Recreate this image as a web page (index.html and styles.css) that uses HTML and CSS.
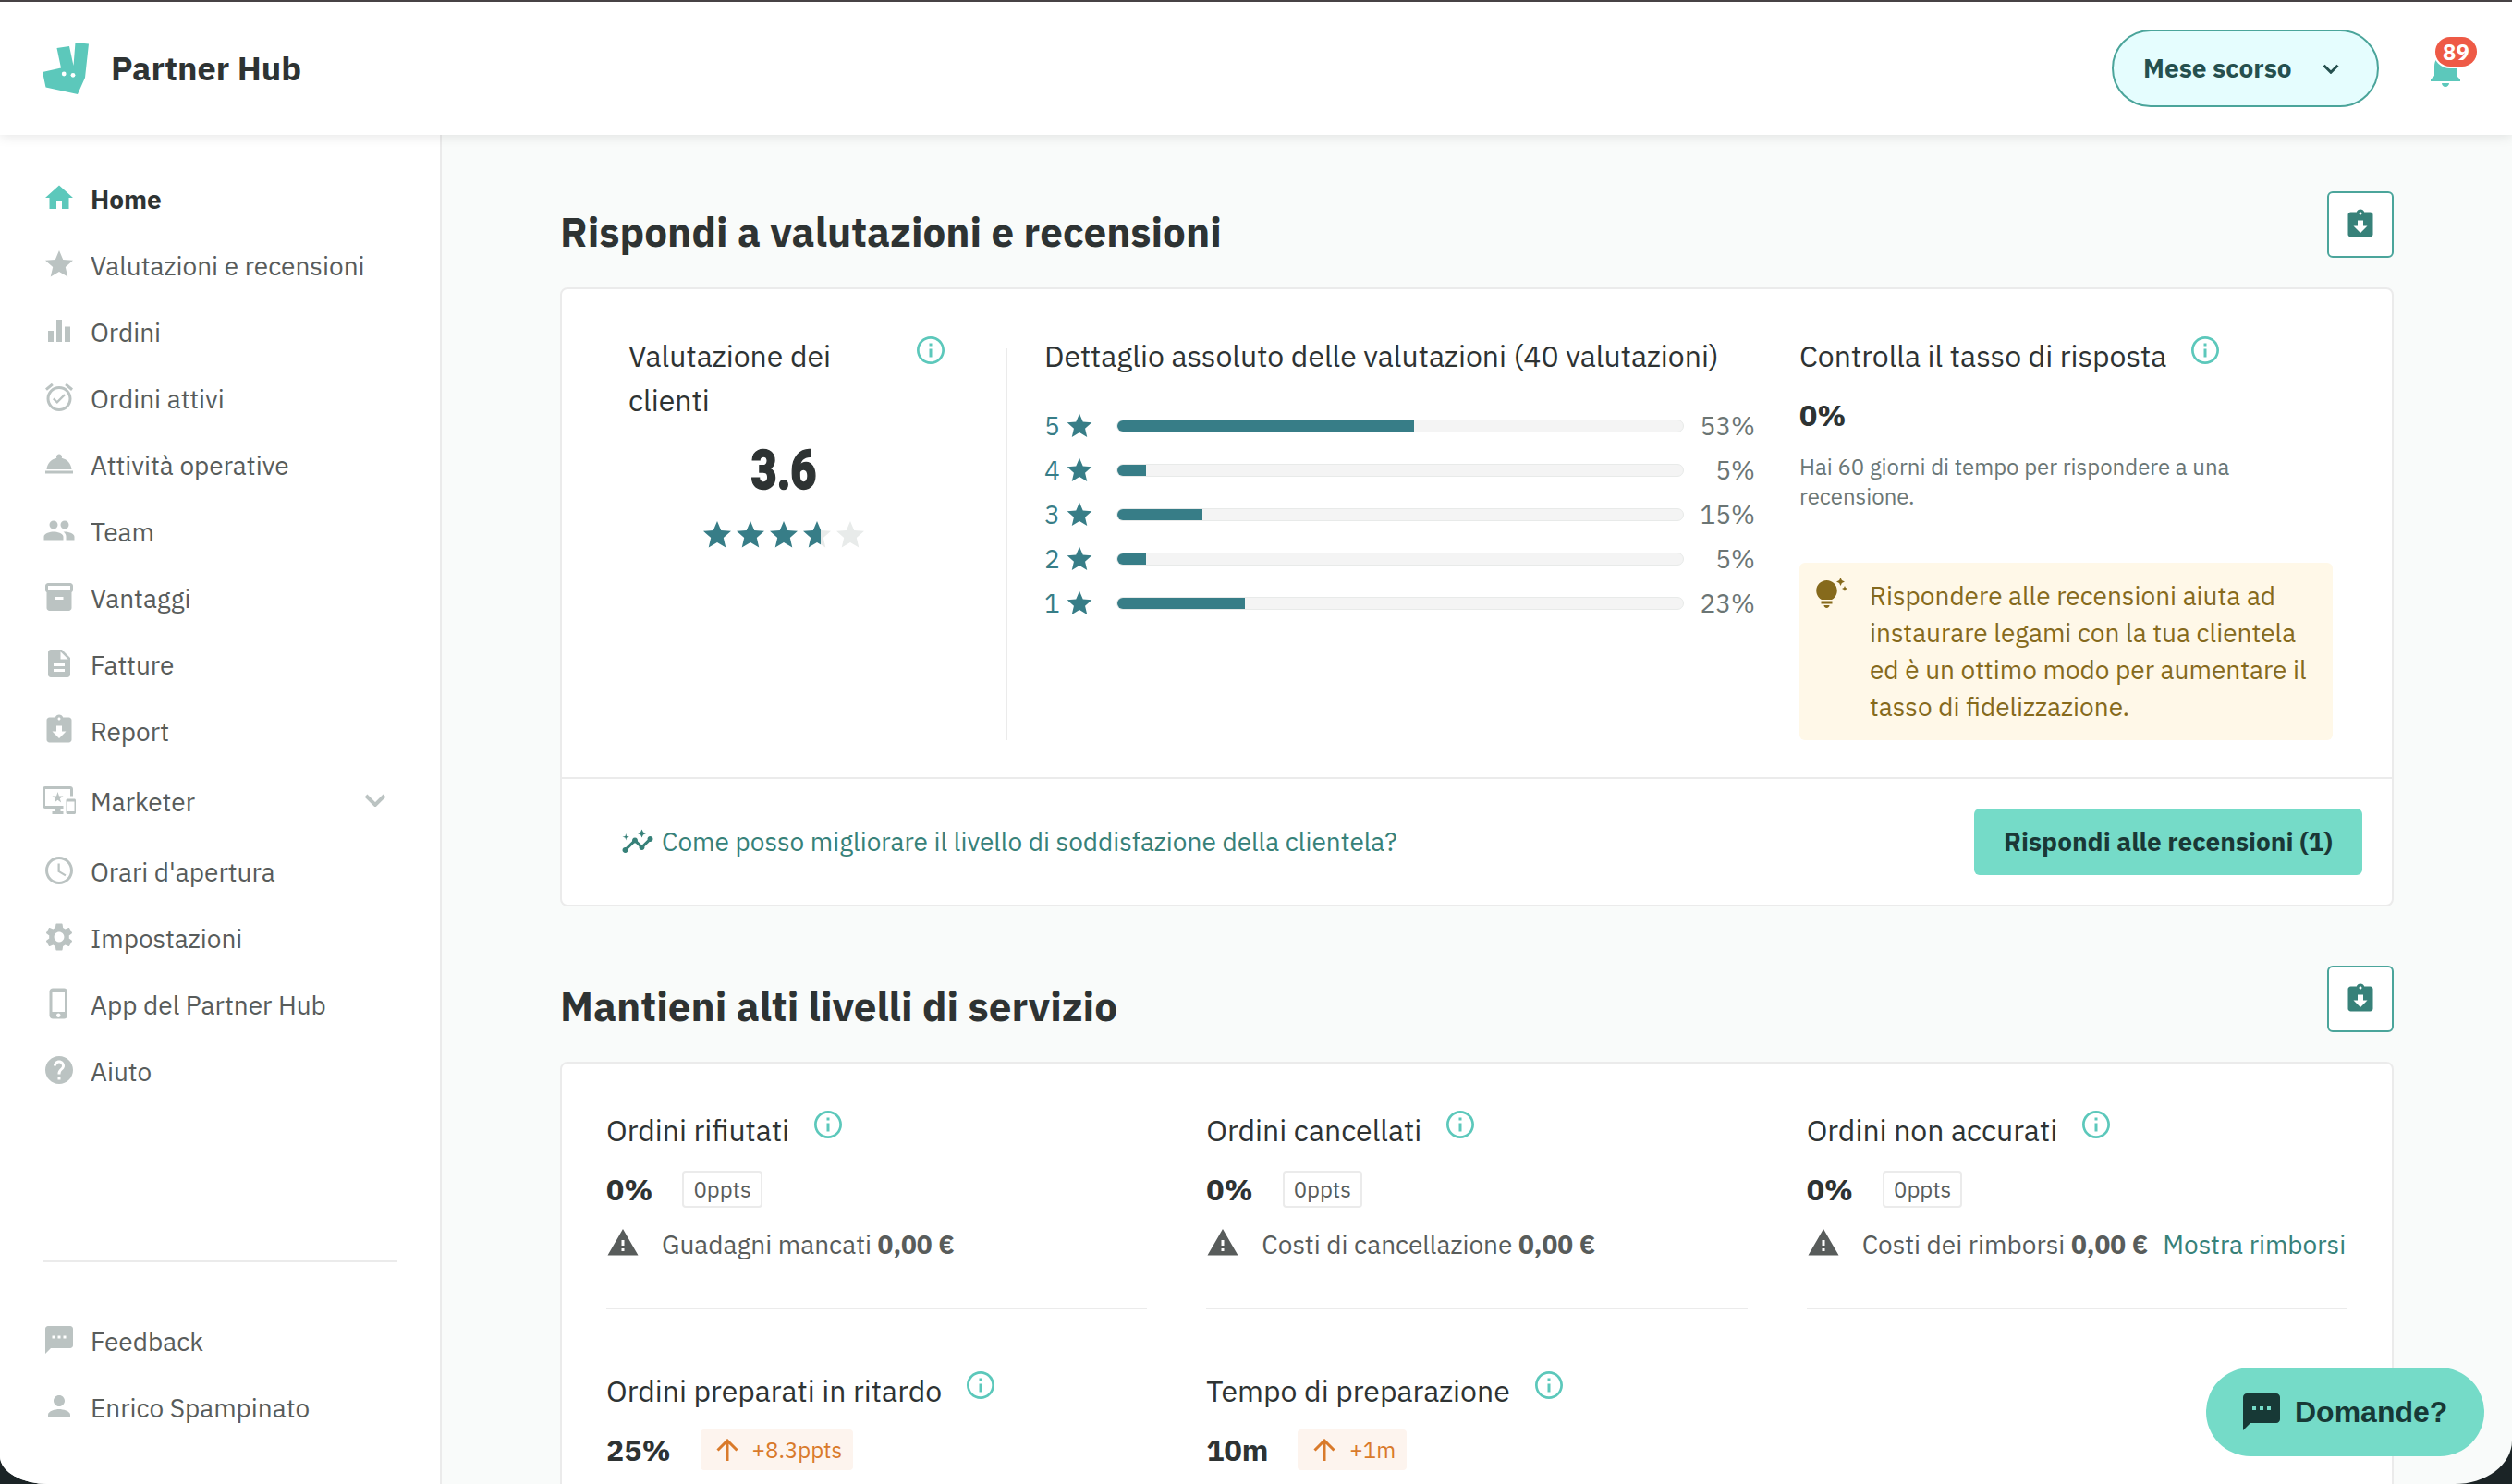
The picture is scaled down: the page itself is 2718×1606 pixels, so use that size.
FILE: index.html
```html
<!DOCTYPE html>
<html lang="it">

<head>
    <meta charset="UTF-8" />
    <meta name="viewport" content="width=device-width, initial-scale=1.0" />
    <title>Partner Hub</title>
    <link rel="stylesheet" href="styles.css">
</head>

<body>

    <!-- icons -->
    <svg class="sprite" aria-hidden="true">
        <symbol id="home" viewBox="0 0 24 24"><path d="M10 20v-6h4v6h5v-8h3L12 3 2 12h3v8z" /></symbol>
        <symbol id="star" viewBox="0 0 24 24"><path d="M12 17.27L18.18 21l-1.64-7.03L22 9.24l-7.19-.61L12 2 9.19 8.63 2 9.24l5.46 4.73L5.82 21z" /></symbol>
        <symbol id="bars" viewBox="0 0 24 24"><path d="M4 12h4v8H4zM10 4h4v16h-4zM16 9h4v11h-4z" /></symbol>
        <symbol id="alarm" viewBox="0 0 24 24"><path d="M22 5.72l-4.6-3.86-1.29 1.53 4.6 3.86L22 5.72zM7.88 3.39L6.6 1.86 2 5.71l1.29 1.53 4.59-3.85zM12 4c-4.97 0-9 4.03-9 9s4.02 9 9 9c4.97 0 9-4.03 9-9s-4.03-9-9-9zm0 16c-3.87 0-7-3.13-7-7s3.13-7 7-7 7 3.13 7 7-3.13 7-7 7zm-1.46-5.47L8.41 12.4l-1.06 1.06 3.18 3.18 6-6-1.06-1.06-4.93 4.95z" /></symbol>
        <symbol id="service" viewBox="0 0 24 24"><path d="M2 17h20v2H2zm11.84-9.21c.1-.24.16-.51.16-.79 0-1.1-.9-2-2-2s-2 .9-2 2c0 .28.06.55.16.79C6.25 8.6 3.27 11.93 3 16h18c-.27-4.07-3.25-7.4-7.16-8.21z" /></symbol>
        <symbol id="team" viewBox="0 0 24 24"><path d="M16 11c1.66 0 2.99-1.34 2.99-3S17.66 5 16 5c-1.66 0-3 1.34-3 3s1.34 3 3 3zm-8 0c1.66 0 2.99-1.34 2.99-3S9.66 5 8 5C6.34 5 5 6.34 5 8s1.34 3 3 3zm0 2c-2.33 0-7 1.17-7 3.5V19h14v-2.5c0-2.33-4.67-3.5-7-3.5zm8 0c-.29 0-.62.02-.97.05 1.16.84 1.97 1.97 1.97 3.45V19h6v-2.5c0-2.33-4.67-3.5-7-3.5z" /></symbol>
        <symbol id="box" viewBox="0 0 24 24"><path d="M20 2H4c-1 0-2 .9-2 2v3.01c0 .72.43 1.34 1 1.69V20c0 1.1 1.1 2 2 2h14c.9 0 2-.9 2-2V8.7c.57-.35 1-.97 1-1.69V4c0-1.1-1-2-2-2zm-5 12H9v-2h6v2zm5-7H4V4h16v3z" /></symbol>
        <symbol id="file" viewBox="0 0 24 24"><path d="M14 2H6c-1.1 0-1.99.9-1.99 2L4 20c0 1.1.89 2 1.99 2H18c1.1 0 2-.9 2-2V8l-6-6zm2 16H8v-2h8v2zm0-4H8v-2h8v2zm-3-5V3.5L18.5 9H13z" /></symbol>
        <symbol id="report" viewBox="0 0 24 24"><path d="M19 3h-4.18C14.4 1.84 13.3 1 12 1c-1.3 0-2.4.84-2.82 2H5c-1.1 0-2 .9-2 2v14c0 1.1.9 2 2 2h14c1.1 0 2-.9 2-2V5c0-1.1-.9-2-2-2zm-7 0c.55 0 1 .45 1 1s-.45 1-1 1-1-.45-1-1 .45-1 1-1zm0 15l-5-5h3V9h4v4h3l-5 5z" /></symbol>
        <symbol id="devices" viewBox="0 0 24 24"><path d="M23 11.01L18 11c-.55 0-1 .45-1 1v9c0 .55.45 1 1 1h5c.55 0 1-.45 1-1v-9c0-.55-.45-.99-1-.99zM23 20h-5v-7h5v7zM20 2H2C.89 2 0 2.89 0 4v12c0 1.1.89 2 2 2h7v2H7v2h8v-2h-2v-2h2v-2H2V4h18v5h2V4c0-1.11-.9-2-2-2zm-8.03 7L11 6l-.97 3H7l2.47 1.76-.94 2.91 2.47-1.8 2.47 1.8-.94-2.91L15 9h-3.03z" /></symbol>
        <symbol id="clock" viewBox="0 0 24 24"><path d="M11.99 2C6.47 2 2 6.48 2 12s4.47 10 9.99 10C17.52 22 22 17.52 22 12S17.52 2 11.99 2zM12 20c-4.42 0-8-3.58-8-8s3.58-8 8-8 8 3.58 8 8-3.58 8-8 8zm.5-13H11v6l5.25 3.15.75-1.23-4.5-2.67z" /></symbol>
        <symbol id="gear" viewBox="0 0 24 24"><path d="M19.14 12.94c.04-.3.06-.61.06-.94 0-.32-.02-.64-.07-.94l2.03-1.58c.18-.14.23-.41.12-.61l-1.92-3.32c-.12-.22-.37-.29-.59-.22l-2.39.96c-.5-.38-1.03-.7-1.62-.94l-.36-2.54c-.04-.24-.24-.41-.48-.41h-3.84c-.24 0-.43.17-.47.41l-.36 2.54c-.59.24-1.13.57-1.62.94l-2.39-.96c-.22-.08-.47 0-.59.22L2.74 8.87c-.12.21-.08.47.12.61l2.03 1.58c-.05.3-.09.63-.09.94s.02.64.07.94l-2.03 1.58c-.18.14-.23.41-.12.61l1.92 3.32c.12.22.37.29.59.22l2.39-.96c.5.38 1.03.7 1.62.94l.36 2.54c.05.24.24.41.48.41h3.84c.24 0 .44-.17.47-.41l.36-2.54c.59-.24 1.13-.56 1.62-.94l2.39.96c.22.08.47 0 .59-.22l1.92-3.32c.12-.22.07-.47-.12-.61l-2.01-1.58zM12 15.6c-1.98 0-3.6-1.62-3.6-3.6s1.62-3.6 3.6-3.6 3.6 1.62 3.6 3.6-1.62 3.6-3.6 3.6z" /></symbol>
        <symbol id="phone" viewBox="0 0 24 24"><path d="M15.5 1h-8C6.12 1 5 2.12 5 3.5v17C5 21.88 6.12 23 7.5 23h8c1.38 0 2.5-1.12 2.5-2.5v-17C18 2.12 16.88 1 15.5 1zm-4 21c-.83 0-1.5-.67-1.5-1.5s.67-1.5 1.5-1.5 1.5.67 1.5 1.5-.67 1.5-1.5 1.5zm4.5-4H7V4h9v14z" /></symbol>
        <symbol id="help" viewBox="0 0 24 24"><path d="M12 2C6.48 2 2 6.48 2 12s4.48 10 10 10 10-4.48 10-10S17.52 2 12 2zm1 17h-2v-2h2v2zm2.07-7.75l-.9.92C13.45 12.9 13 13.5 13 15h-2v-.5c0-1.1.45-2.1 1.17-2.83l1.24-1.26c.37-.36.59-.86.59-1.41 0-1.1-.9-2-2-2s-2 .9-2 2H8c0-2.21 1.79-4 4-4s4 1.79 4 4c0 .88-.36 1.68-.93 2.25z" /></symbol>
        <symbol id="chat" viewBox="0 0 24 24"><path d="M20 2H4c-1.1 0-1.99.9-1.99 2L2 22l4-4h14c1.1 0 2-.9 2-2V4c0-1.1-.9-2-2-2zM9 11H7V9h2v2zm4 0h-2V9h2v2zm4 0h-2V9h2v2z" /></symbol>
        <symbol id="person" viewBox="0 0 24 24"><path d="M12 12c2.21 0 4-1.79 4-4s-1.79-4-4-4-4 1.79-4 4 1.79 4 4 4zm0 2c-2.67 0-8 1.34-8 4v2h16v-2c0-2.66-5.33-4-8-4z" /></symbol>
        <symbol id="bell" viewBox="0 0 24 24"><path d="M12 22c1.1 0 2-.9 2-2h-4c0 1.1.89 2 2 2zm6-6v-5c0-3.07-1.64-5.64-4.5-6.32V4c0-.83-.67-1.5-1.5-1.5s-1.5.67-1.5 1.5v.68C7.63 5.36 6 7.92 6 11v5l-2 2v1h16v-1l-2-2z" /></symbol>
        <symbol id="info" viewBox="0 0 24 24"><path d="M11 7h2v2h-2zm0 4h2v6h-2zm1-9C6.48 2 2 6.48 2 12s4.48 10 10 10 10-4.48 10-10S17.52 2 12 2zm0 18.2c-4.53 0-8.2-3.67-8.2-8.2s3.67-8.2 8.2-8.2 8.2 3.67 8.2 8.2-3.67 8.2-8.2 8.2z" /></symbol>
        <symbol id="warning" viewBox="0 0 24 24"><path d="M1 21h22L12 2 1 21zm12-3h-2v-2h2v2zm0-4h-2v-4h2v4z" /></symbol>
        <symbol id="bulb" viewBox="0 0 24 24"><path d="M7 20h4c0 1.1-.9 2-2 2s-2-.9-2-2zm-2-1h8v-2H5v2zm11.5-9.5c0 3.82-2.66 5.86-3.77 6.5H5.27C4.16 15.36 1.5 13.32 1.5 9.5 1.5 5.36 4.86 2 9 2s7.5 3.36 7.5 7.5zm4.87-2.13L20 8l1.37.63L22 10l.63-1.37L24 8l-1.37-.63L22 6l-.63 1.37zM19 6l.94-2.06L22 3l-2.06-.94L19 0l-.94 2.06L16 3l2.06.94L19 6z" /></symbol>
        <symbol id="insights" viewBox="0 0 24 24"><path d="M21 8c-1.45 0-2.26 1.44-1.93 2.51l-3.55 3.56c-.3-.09-.74-.09-1.04 0l-2.55-2.55C12.27 10.45 11.46 9 10 9c-1.45 0-2.27 1.44-1.93 2.52l-4.56 4.55C2.44 15.74 1 16.55 1 18c0 1.1.9 2 2 2 1.45 0 2.26-1.44 1.93-2.51l4.55-4.56c.3.09.74.09 1.04 0l2.55 2.55C12.73 16.55 13.54 18 15 18c1.45 0 2.27-1.44 1.93-2.52l3.56-3.55C21.56 12.26 23 11.45 23 10c0-1.1-.9-2-2-2zM15 9l.94-2.07L18 6l-2.06-.93L15 3l-.92 2.07L12 6l2.08.93L15 9zM3.5 11L4 9l2-.5L4 8l-.5-2L3 8l-2 .5L3 9l.5 2z" /></symbol>
        <symbol id="arrow-up" viewBox="0 0 24 24"><path d="M12 24V2M1.5 12.5L12 2l10.5 10.5" fill="none" stroke="currentColor" stroke-width="3" /></symbol>
        <symbol id="chevron" viewBox="0 0 24 14"><path d="M2 2l10 10L22 2" fill="none" stroke="currentColor" stroke-width="4" /></symbol>
    </svg>

    <div class="app">
        <header class="header">
            <svg class="logo" viewBox="0 0 50 56">
                <path d="M0 32l20-4.5L15.5 6 29 4l4.5 21L35.5 0 50 1.5 46 38l-8 18L3.5 48.5z" />
                <circle cx="23.2" cy="34" r="2.4" fill="#fff" />
                <circle cx="33" cy="35.3" r="2.4" fill="#fff" />
            </svg>
            <span class="brand">Partner Hub</span>
            <button class="period">
                <span class="period-label">Mese scorso</span>
                <svg class="period-arrow"><use href="#chevron" /></svg>
            </button>
            <div class="notifications">
                <svg class="bell"><use href="#bell" /></svg>
                <span class="badge">89</span>
            </div>
        </header>

        <div class="layout">
            <nav class="sidebar">
                <a class="nav-item active"><svg class="icon"><use href="#home" /></svg>Home</a>
                <a class="nav-item"><svg class="icon"><use href="#star" /></svg>Valutazioni e recensioni</a>
                <a class="nav-item"><svg class="icon"><use href="#bars" /></svg>Ordini</a>
                <a class="nav-item"><svg class="icon"><use href="#alarm" /></svg>Ordini attivi</a>
                <a class="nav-item"><svg class="icon"><use href="#service" /></svg>Attività operative</a>
                <a class="nav-item"><svg class="icon"><use href="#team" /></svg>Team</a>
                <a class="nav-item"><svg class="icon"><use href="#box" /></svg>Vantaggi</a>
                <a class="nav-item"><svg class="icon"><use href="#file" /></svg>Fatture</a>
                <a class="nav-item"><svg class="icon"><use href="#report" /></svg>Report</a>
                <a class="nav-item expandable">
                    <svg class="icon"><use href="#devices" /></svg>Marketer
                    <svg class="nav-arrow"><use href="#chevron" /></svg>
                </a>
                <a class="nav-item"><svg class="icon"><use href="#clock" /></svg>Orari d'apertura</a>
                <a class="nav-item"><svg class="icon"><use href="#gear" /></svg>Impostazioni</a>
                <a class="nav-item"><svg class="icon"><use href="#phone" /></svg>App del Partner Hub</a>
                <a class="nav-item"><svg class="icon"><use href="#help" /></svg>Aiuto</a>

                <div class="nav-bottom">
                    <a class="nav-item"><svg class="icon"><use href="#chat" /></svg>Feedback</a>
                    <a class="nav-item"><svg class="icon"><use href="#person" /></svg>Enrico Spampinato</a>
                </div>
            </nav>

            <main class="main">
                <!-- ratings -->
                <section class="section">
                    <div class="section-head">
                        <h2 class="section-title">Rispondi a valutazioni e recensioni</h2>
                        <button class="download-btn"><svg class="icon"><use href="#report" /></svg></button>
                    </div>
                    <div class="card">
                        <div class="ratings">
                            <div class="overall">
                                <div class="title-row wide">
                                    <h3 class="title">Valutazione dei<br>clienti</h3>
                                    <svg class="icon info"><use href="#info" /></svg>
                                </div>
                                <div class="score">3.6</div>
                                <div class="stars">
                                    <svg class="icon"><use href="#star" /></svg>
                                    <svg class="icon"><use href="#star" /></svg>
                                    <svg class="icon"><use href="#star" /></svg>
                                    <svg class="icon" viewBox="0 0 24 24">
                                        <linearGradient id="part" x1="0" x2="24" y1="0" y2="0" gradientUnits="userSpaceOnUse">
                                            <stop offset="60%" stop-color="#377d87" />
                                            <stop offset="60%" stop-color="#e8ebea" />
                                        </linearGradient>
                                        <path fill="url(#part)" d="M12 17.27L18.18 21l-1.64-7.03L22 9.24l-7.19-.61L12 2 9.19 8.63 2 9.24l5.46 4.73L5.82 21z" />
                                    </svg>
                                    <svg class="icon off"><use href="#star" /></svg>
                                </div>
                            </div>

                            <div class="separator"></div>

                            <div class="breakdown">
                                <h3 class="title">Dettaglio assoluto delle valutazioni (40 valutazioni)</h3>
                                <div class="rows">
                                    <div class="row"><span class="num">5</span><svg class="row-star"><use href="#star" /></svg><div class="bar"><div class="fill" style="width: 52.5%"></div></div><span class="pct">53%</span></div>
                                    <div class="row"><span class="num">4</span><svg class="row-star"><use href="#star" /></svg><div class="bar"><div class="fill" style="width: 5%"></div></div><span class="pct">5%</span></div>
                                    <div class="row"><span class="num">3</span><svg class="row-star"><use href="#star" /></svg><div class="bar"><div class="fill" style="width: 15%"></div></div><span class="pct">15%</span></div>
                                    <div class="row"><span class="num">2</span><svg class="row-star"><use href="#star" /></svg><div class="bar"><div class="fill" style="width: 5%"></div></div><span class="pct">5%</span></div>
                                    <div class="row"><span class="num">1</span><svg class="row-star"><use href="#star" /></svg><div class="bar"><div class="fill" style="width: 22.5%"></div></div><span class="pct">23%</span></div>
                                </div>
                            </div>

                            <div class="reply">
                                <div class="title-row">
                                    <h3 class="title">Controlla il tasso di risposta</h3>
                                    <svg class="icon info"><use href="#info" /></svg>
                                </div>
                                <div class="value reply-value">0%</div>
                                <p class="hint">Hai 60 giorni di tempo per rispondere a una<br>recensione.</p>
                                <div class="tip">
                                    <svg class="icon"><use href="#bulb" /></svg>
                                    <p class="tip-text">Rispondere alle recensioni aiuta ad<br>instaurare legami con la tua clientela<br>ed è un ottimo modo per aumentare il<br>tasso di fidelizzazione.</p>
                                </div>
                            </div>
                        </div>
                        <div class="card-footer">
                            <a class="link improve"><svg class="icon"><use href="#insights" /></svg><span class="improve-text">Come posso migliorare il livello di soddisfazione della clientela?</span></a>
                            <button class="primary-btn">Rispondi alle recensioni (1)</button>
                        </div>
                    </div>
                </section>

                <!-- service levels -->
                <section class="section">
                    <div class="section-head">
                        <h2 class="section-title">Mantieni alti livelli di servizio</h2>
                        <button class="download-btn"><svg class="icon"><use href="#report" /></svg></button>
                    </div>
                    <div class="card metrics">
                        <div class="metric">
                            <div class="title-row">
                                <h3 class="title">Ordini rifiutati</h3>
                                <svg class="icon info"><use href="#info" /></svg>
                            </div>
                            <div class="value-row"><span class="value">0%</span><span class="chip">0ppts</span></div>
                            <div class="cost"><svg class="icon"><use href="#warning" /></svg><span>Guadagni mancati <b>0,00 €</b></span></div>
                        </div>
                        <div class="metric">
                            <div class="title-row">
                                <h3 class="title">Ordini cancellati</h3>
                                <svg class="icon info"><use href="#info" /></svg>
                            </div>
                            <div class="value-row"><span class="value">0%</span><span class="chip">0ppts</span></div>
                            <div class="cost"><svg class="icon"><use href="#warning" /></svg><span>Costi di cancellazione <b>0,00 €</b></span></div>
                        </div>
                        <div class="metric">
                            <div class="title-row">
                                <h3 class="title">Ordini non accurati</h3>
                                <svg class="icon info"><use href="#info" /></svg>
                            </div>
                            <div class="value-row"><span class="value">0%</span><span class="chip">0ppts</span></div>
                            <div class="cost"><svg class="icon"><use href="#warning" /></svg><span>Costi dei rimborsi <b>0,00 €</b></span><a class="link refunds">Mostra rimborsi</a></div>
                        </div>
                        <div class="metric">
                            <div class="title-row">
                                <h3 class="title">Ordini preparati in ritardo</h3>
                                <svg class="icon info"><use href="#info" /></svg>
                            </div>
                            <div class="value-row"><span class="value">25%</span><span class="chip up"><svg class="chip-arrow"><use href="#arrow-up" /></svg>+8.3ppts</span></div>
                        </div>
                        <div class="metric">
                            <div class="title-row">
                                <h3 class="title">Tempo di preparazione</h3>
                                <svg class="icon info"><use href="#info" /></svg>
                            </div>
                            <div class="value-row"><span class="value">10m</span><span class="chip up"><svg class="chip-arrow"><use href="#arrow-up" /></svg>+1m</span></div>
                        </div>
                    </div>
                </section>
            </main>
        </div>

        <button class="help-btn"><svg class="help-icon"><use href="#chat" /></svg>Domande?</button>
    </div>

</body>

</html>
```
FILE: styles.css
```css
* {
    box-sizing: border-box;
}

body {
    margin: 0;
    background: #1b2426;
    color: #2e3333;
    font-family: "IBM Plex Sans", Roboto, sans-serif;
    font-size: 28px;
}

h2,
h3,
p {
    margin: 0;
}

button {
    border: none;
    font: inherit;
    cursor: pointer;
}

.sprite {
    position: absolute;
    width: 0;
    height: 0;
}

.icon {
    flex: none;
    width: 36px;
    height: 36px;
    fill: currentColor;
}

.app {
    position: relative;
    display: flex;
    flex-direction: column;
    height: 1606px;
    overflow: hidden;
    border-top: 2px solid #474345;
    border-radius: 0 0 62px 52px / 0 0 47px 30px;
    background: #f9fbfa;
}

/* header */
.header {
    position: relative;
    z-index: 1;
    flex: none;
    display: flex;
    align-items: center;
    height: 144px;
    padding: 0 48px 0 46px;
    background: #fff;
    box-shadow: 0 2px 12px rgba(0, 0, 0, 0.1);
}

.logo {
    width: 50px;
    height: 56px;
    fill: #5cc8bb;
}

.brand {
    margin-left: 24px;
    padding-bottom: 2px;
    font-size: 36px;
    font-weight: 700;
}

.period {
    display: flex;
    align-items: center;
    justify-content: space-between;
    width: 289px;
    height: 84px;
    margin-left: auto;
    padding: 0 41px 0 32px;
    border: 2px solid #4ba59b;
    border-radius: 42px;
    background: #e5fdfe;
    color: #25504f;
    font-weight: 700;
}

.period-label {
    padding-bottom: 2px;
}

.period-arrow {
    width: 18px;
    height: 11px;
}

.notifications {
    position: relative;
    width: 48px;
    height: 48px;
    margin-left: 48px;
}

.bell {
    display: block;
    width: 48px;
    height: 48px;
    fill: #5cc8bb;
}

.badge {
    position: absolute;
    top: -10px;
    left: 13px;
    width: 45px;
    height: 32px;
    border-radius: 16px;
    background: #ee5a46;
    box-shadow: 0 0 0 2px #fff;
    color: #fff;
    font-size: 24px;
    font-weight: 700;
    line-height: 32px;
    text-align: center;
}

.layout {
    flex: 1;
    display: flex;
    min-height: 0;
}

/* sidebar */
.sidebar {
    flex: none;
    width: 478px;
    padding: 34px 46px 0;
    border-right: 2px solid #ebebeb;
    background: #fff;
}

.nav-item {
    display: flex;
    align-items: center;
    gap: 16px;
    height: 72px;
    padding-bottom: 2px;
    color: #585c5b;
}

.nav-item .icon {
    margin-bottom: 2px;
    color: #bbc3c2;
}

.nav-item.active {
    color: #2e3333;
    font-weight: 700;
}

.nav-item.active .icon {
    color: #5cc8bb;
}

.nav-item.expandable {
    height: 80px;
}

.nav-arrow {
    width: 24px;
    height: 14px;
    margin-left: auto;
    margin-right: 12px;
    margin-bottom: 2px;
    color: #bbc3c2;
}

.nav-bottom {
    margin-top: 168px;
    padding-top: 50px;
    border-top: 2px solid #ebebeb;
}

/* content */
.main {
    flex: 1;
    padding: 61px 128px 0;
}

.section {
    margin-bottom: 64px;
}

.section-head {
    display: flex;
    align-items: flex-end;
    justify-content: space-between;
    margin-bottom: 32px;
}

.section-title {
    padding-bottom: 1px;
    font-size: 44px;
    font-weight: 700;
    line-height: 54px;
}

.download-btn {
    display: flex;
    align-items: center;
    justify-content: center;
    width: 72px;
    height: 72px;
    padding: 0;
    border: 2px solid #4ba59b;
    border-radius: 6px;
    background: #fff;
    color: #378179;
}

.card {
    border: 2px solid #ebebeb;
    border-radius: 8px;
    background: #fff;
}

.title-row {
    display: flex;
    align-items: flex-start;
    gap: 24px;
}

.title-row.wide {
    justify-content: space-between;
    margin-right: -9px;
}

.title {
    font-size: 32px;
    font-weight: 400;
    line-height: 48px;
    white-space: nowrap;
}

.info {
    color: #5cc8bb;
}

.value {
    font-size: 32px;
    font-weight: 700;
    line-height: 48px;
}

.link {
    color: #378179;
}

/* ratings card */
.ratings {
    display: flex;
    height: 528px;
    padding: 48px 64px 40px 72px;
}

.overall {
    width: 336px;
}

.score {
    margin-top: 22px;
    font-family: Roboto, sans-serif;
    font-size: 59px;
    font-weight: 900;
    line-height: 60px;
    text-align: center;
    transform: scaleX(0.82);
    -webkit-text-stroke: 1.5px #2e3333;
}

.stars {
    display: flex;
    justify-content: center;
    margin-top: 22px;
    color: #377d87;
}

.stars .off {
    color: #e8ebea;
}

.separator {
    width: 2px;
    margin: 16px 40px 0 72px;
    background: #ebebeb;
}

.breakdown {
    width: 770px;
    margin-right: 47px;
}

.rows {
    margin-top: 28px;
}

.row {
    display: flex;
    align-items: center;
    height: 48px;
}

.num {
    width: 22px;
    padding-bottom: 2px;
    color: #377d87;
}

.row-star {
    width: 32px;
    height: 32px;
    fill: #377d87;
}

.bar {
    width: 614px;
    height: 14px;
    margin-left: 24px;
    overflow: hidden;
    border: 1px solid #e8eae9;
    border-radius: 7px;
    background: #f4f4f4;
}

.fill {
    height: 12px;
    background: #377d87;
}

.pct {
    margin-left: auto;
    padding: 0 1px 2px 0;
    color: #6b7574;
}

.reply {
    width: 577px;
}

.reply-value {
    margin-top: 16px;
}

.hint {
    margin-top: 16px;
    color: #6b7776;
    font-size: 24px;
    line-height: 32px;
}

.tip {
    display: flex;
    gap: 24px;
    margin-top: 56px;
    padding: 16px;
    border-radius: 6px;
    background: #fff8e8;
    color: #866a1c;
}

.tip-text {
    line-height: 40px;
    white-space: nowrap;
}

.card-footer {
    display: flex;
    align-items: center;
    justify-content: space-between;
    height: 138px;
    padding: 0 32px 0 64px;
    border-top: 2px solid #ebebeb;
}

.improve {
    display: flex;
    align-items: center;
    gap: 8px;
}

.improve-text {
    padding-bottom: 2px;
}

.primary-btn {
    width: 420px;
    height: 72px;
    padding: 0 0 2px;
    border-radius: 6px;
    background: #75dbc8;
    color: #1a3836;
    font-weight: 700;
}

/* service levels card */
.metrics {
    display: grid;
    grid-template-columns: repeat(3, 1fr);
    gap: 64px;
    padding: 48px;
}

.metric {
    padding-bottom: 49px;
    border-bottom: 2px solid #ebebeb;
}

.value-row {
    display: flex;
    align-items: center;
    gap: 32px;
    height: 48px;
    margin-top: 16px;
}

.chip {
    display: flex;
    align-items: center;
    height: 40px;
    padding: 0 10px;
    border: 2px solid #ebebeb;
    border-radius: 4px;
    color: #585c5b;
    font-size: 24px;
}

.chip.up {
    height: 44px;
    padding: 0 12px 0 17px;
    border: none;
    background: #fdf4ee;
    color: #d97a2b;
}

.chip-arrow {
    width: 24px;
    height: 24px;
    margin-right: 15px;
}

.cost {
    display: flex;
    align-items: center;
    height: 39px;
    margin-top: 16px;
    padding-bottom: 1px;
    color: #585c5b;
    white-space: nowrap;
}

.cost .icon {
    margin: 0 24px 2px 0;
}

.refunds {
    margin-left: 16px;
}

/* floating help button */
.help-btn {
    position: absolute;
    z-index: 2;
    right: 30px;
    bottom: 30px;
    display: flex;
    align-items: center;
    gap: 12px;
    width: 301px;
    height: 96px;
    padding: 0 0 0 36px;
    border-radius: 48px;
    background: #75dbc8;
    color: #173936;
    font-family: "Liberation Sans", Arial, sans-serif;
    font-size: 32px;
    font-weight: 700;
}

.help-icon {
    width: 48px;
    height: 48px;
    fill: currentColor;
}
```
